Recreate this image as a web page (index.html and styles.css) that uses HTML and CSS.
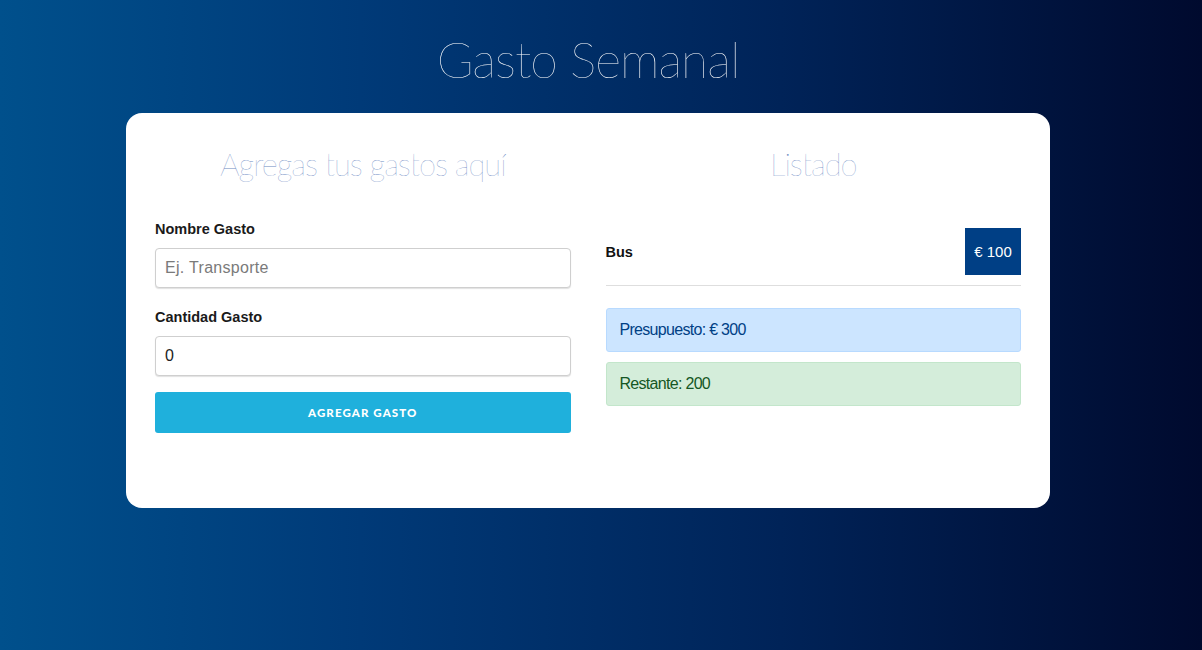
FILE: index.html
```html
<!DOCTYPE html>
<html lang="es">
<head>
<meta charset="utf-8">
<title>Gasto Semanal</title>
<link rel="stylesheet" href="styles.css">
</head>
<body>
<div class="page">
  <h1 class="title">Gasto Semanal</h1>
  <div class="card">
    <div class="col">
      <h2 class="subtitle">Agregas tus gastos aquí</h2>
      <form class="form">
        <label class="label">Nombre Gasto</label>
        <input class="input" type="text" placeholder="Ej. Transporte">
        <label class="label">Cantidad Gasto</label>
        <input class="input" type="text" value="0">
        <button class="btn" type="button">Agregar Gasto</button>
      </form>
    </div>
    <div class="col">
      <h2 class="subtitle">Listado</h2>
      <div class="item">
        <span class="item-name">Bus</span>
        <span class="badge">€ 100</span>
      </div>
      <div class="alert alert-info">Presupuesto: € 300</div>
      <div class="alert alert-ok">Restante: 200</div>
    </div>
  </div>
</div>
</body>
</html>
```
FILE: styles.css
```css
* { box-sizing: border-box; }
html, body { margin: 0; padding: 0; }
body {
  height: 650px;
  background: linear-gradient(to right, #00508c 0%, #003a78 30%, #002358 65%, #000a2e 100%);
  font-family: "Liberation Sans", Arial, sans-serif;
  overflow: hidden;
}
.page {
  display: flex;
  flex-direction: column;
  align-items: center;
  padding-right: 26px;
}
.title {
  margin: 27px 0 0 0;
  height: 86px;
  font-family: Lato, sans-serif;
  font-weight: 100;
  font-size: 50px;
  line-height: 64px;
  color: #ffffff;
  letter-spacing: -1px;
}
.card {
  width: 924px;
  height: 395px;
  background: #ffffff;
  border-radius: 16px;
  padding: 0 29px;
  display: flex;
  gap: 35px;
}
.col { flex: 1; }
.subtitle {
  margin: 29px 0 0 0;
  height: 71px;
  text-align: center;
  font-family: Lato, sans-serif;
  font-weight: 100;
  font-size: 31px;
  line-height: 44px;
  color: #6a88c2;
  letter-spacing: -1px;
}
.form { display: flex; flex-direction: column; }
.label {
  font-weight: bold;
  font-size: 14.5px;
  color: #1a1a1a;
  line-height: 20px;
  margin-top: 6px;
  margin-bottom: 9px;
}
.input {
  height: 40px;
  border: 1px solid #cfcfcf;
  border-radius: 4px;
  padding: 0 9px;
  font-family: "Liberation Sans", Arial, sans-serif;
  font-size: 16px;
  color: #222;
  box-shadow: 0 1px 1px rgba(0,0,0,0.12);
  margin-bottom: 13px;
}
.input::placeholder { color: #7a7a7a; letter-spacing: 0.3px; }
.input + .btn { margin-top: 3px; }
.btn {
  height: 41px;
  border: none;
  border-radius: 3px;
  background: #1fb0dc;
  color: #ffffff;
  font-family: Lato, sans-serif;
  font-weight: 900;
  font-size: 11.5px;
  letter-spacing: 1.1px;
  text-transform: uppercase;
}
.item {
  display: flex;
  align-items: center;
  justify-content: space-between;
  height: 58px;
  margin-top: 15px;
  padding-bottom: 10px;
  border-bottom: 1px solid #dedede;
  margin-bottom: 22px;
}
.item-name {
  font-weight: bold;
  font-size: 14.5px;
  color: #111;
}
.badge {
  background: #003f85;
  color: #ffffff;
  font-size: 15px;
  width: 56px;
  height: 47px;
  display: flex;
  align-items: center;
  justify-content: center;
}
.alert {
  height: 44px;
  border: 1px solid;
  border-radius: 3px;
  padding: 0 13px;
  display: flex;
  align-items: center;
  font-size: 16px;
  letter-spacing: -0.7px;
  margin-bottom: 10px;
}
.alert-info { background: #cce5ff; border-color: #b8daff; color: #004085; }
.alert-ok { background: #d4edda; border-color: #c3e6cb; color: #155724; }
```
